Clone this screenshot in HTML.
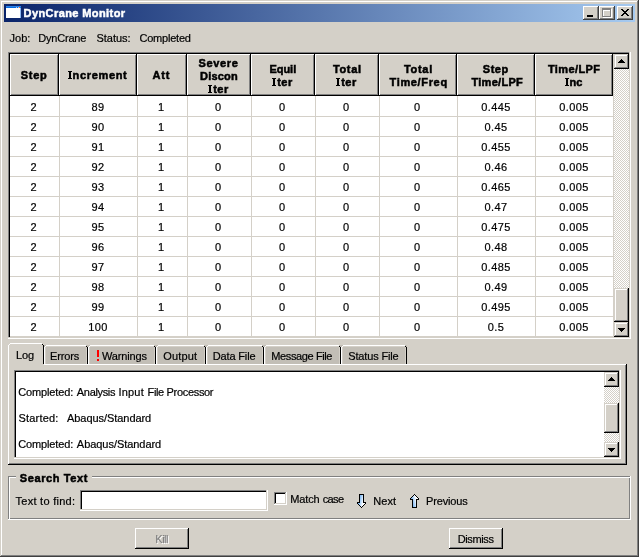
<!DOCTYPE html>
<html><head><meta charset="utf-8"><title>DynCrane Monitor</title>
<style>
html,body{margin:0;padding:0;background:#d4d0c8;}
#w{position:relative;will-change:transform;width:639px;height:557px;overflow:hidden;font-family:"Liberation Sans",sans-serif;font-size:11px;line-height:13px;color:#000;-webkit-text-stroke:0.2px;}
#w div,#w svg,#w span{position:absolute;display:block;}
.t{white-space:pre;}
</style></head><body><div id="w">
<div style="left:0px;top:0px;width:639px;height:557px;background:#d4d0c8;"></div>
<div style="left:1px;top:1px;width:636px;height:1px;background:#fff;"></div>
<div style="left:1px;top:1px;width:1px;height:554px;background:#fff;"></div>
<div style="left:637px;top:1px;width:1px;height:555px;background:#808080;"></div>
<div style="left:1px;top:555px;width:637px;height:1px;background:#808080;"></div>
<div style="left:638px;top:0px;width:1px;height:557px;background:#404040;"></div>
<div style="left:0px;top:556px;width:639px;height:1px;background:#404040;"></div>
<div style="left:4px;top:4px;width:631px;height:18px;background:linear-gradient(to right,#0a246a 0%,#a6caf0 100%);"></div>
<div style="left:6px;top:6px;width:15px;height:12px;background:#fff;"></div>
<div style="left:6px;top:6px;width:15px;height:2px;background:#0a6ce0;"></div>
<div style="left:19px;top:7px;width:1px;height:1px;background:#f07030;"></div>
<div style="left:6px;top:6px;width:15px;height:1px;background:#2b84ea;"></div>
<div style="left:16px;top:7px;width:1px;height:1px;background:#9cc3f2;"></div>
<div style="left:18px;top:7px;width:1px;height:1px;background:#9cc3f2;"></div>
<div style="left:20px;top:8px;width:1px;height:10px;background:#8fb8f0;"></div>
<span class="t " style="left:23.6px;top:7px;letter-spacing:0.408px;font-weight:bold;-webkit-text-stroke:0.5px;color:#fff;">DynCrane Monitor</span>
<div style="left:583px;top:6px;width:16px;height:14px;background:#d4d0c8;"></div>
<div style="left:583px;top:6px;width:15px;height:1px;background:#fff;"></div>
<div style="left:583px;top:6px;width:1px;height:13px;background:#fff;"></div>
<div style="left:598px;top:6px;width:1px;height:14px;background:#404040;"></div>
<div style="left:583px;top:19px;width:16px;height:1px;background:#404040;"></div>
<div style="left:597px;top:7px;width:1px;height:12px;background:#808080;"></div>
<div style="left:584px;top:18px;width:14px;height:1px;background:#808080;"></div>
<div style="left:599px;top:6px;width:16px;height:14px;background:#d4d0c8;"></div>
<div style="left:599px;top:6px;width:15px;height:1px;background:#fff;"></div>
<div style="left:599px;top:6px;width:1px;height:13px;background:#fff;"></div>
<div style="left:614px;top:6px;width:1px;height:14px;background:#404040;"></div>
<div style="left:599px;top:19px;width:16px;height:1px;background:#404040;"></div>
<div style="left:613px;top:7px;width:1px;height:12px;background:#808080;"></div>
<div style="left:600px;top:18px;width:14px;height:1px;background:#808080;"></div>
<div style="left:617px;top:6px;width:16px;height:14px;background:#d4d0c8;"></div>
<div style="left:617px;top:6px;width:15px;height:1px;background:#fff;"></div>
<div style="left:617px;top:6px;width:1px;height:13px;background:#fff;"></div>
<div style="left:632px;top:6px;width:1px;height:14px;background:#404040;"></div>
<div style="left:617px;top:19px;width:16px;height:1px;background:#404040;"></div>
<div style="left:631px;top:7px;width:1px;height:12px;background:#808080;"></div>
<div style="left:618px;top:18px;width:14px;height:1px;background:#808080;"></div>
<div style="left:587px;top:15px;width:6px;height:2px;background:#000;"></div>
<svg style="left:602px;top:8px" width="10" height="10" shape-rendering="crispEdges"><path d="M1 1h9v9h-9zM2 3v6h7v-6z" fill="#fff" fill-rule="evenodd"/><path d="M0 0h9v9h-9zM1 2v6h7v-6z" fill="#808080" fill-rule="evenodd"/></svg>
<svg style="left:621px;top:9px" width="8" height="7" shape-rendering="crispEdges"><path d="M0 0h2v1h-2zM6 0h2v1h-2zM1 1h2v1h-2zM5 1h2v1h-2zM2 2h4v1h-4zM3 3h2v1h-2zM2 4h4v1h-4zM1 5h2v1h-2zM5 5h2v1h-2zM0 6h2v1h-2zM6 6h2v1h-2z" fill="#000"/></svg>
<span class="t " style="left:9.48px;top:32px;letter-spacing:0.05px;">Job:</span>
<span class="t " style="left:38.3px;top:32px;letter-spacing:-0.21px;">DynCrane</span>
<span class="t " style="left:96.4px;top:32px;">Status:</span>
<span class="t " style="left:139.4px;top:32px;letter-spacing:-0.203px;">Completed</span>
<div style="left:8px;top:52px;width:623px;height:287px;background:#fff;"></div>
<div style="left:8px;top:52px;width:622px;height:286px;background:#d4d0c8;"></div>
<div style="left:8px;top:52px;width:621px;height:1px;background:#808080;"></div>
<div style="left:8px;top:52px;width:1px;height:285px;background:#808080;"></div>
<div style="left:9px;top:53px;width:620px;height:1px;background:#000;"></div>
<div style="left:9px;top:53px;width:1px;height:284px;background:#000;"></div>
<div style="left:10px;top:96px;width:604px;height:241px;background:#fff;"></div>
<div style="left:10px;top:54px;width:49px;height:42px;background:#d4d0c8;"></div>
<div style="left:10px;top:54px;width:48px;height:1px;background:#fff;"></div>
<div style="left:10px;top:54px;width:1px;height:41px;background:#fff;"></div>
<div style="left:58px;top:54px;width:1px;height:42px;background:#000;"></div>
<div style="left:10px;top:95px;width:49px;height:1px;background:#000;"></div>
<div style="left:57px;top:55px;width:1px;height:40px;background:#808080;"></div>
<div style="left:11px;top:94px;width:47px;height:1px;background:#808080;"></div>
<span class="t " style="left:20.66px;top:69px;letter-spacing:0.74px;font-weight:bold;-webkit-text-stroke:0.5px;">Step</span>
<div style="left:59px;top:54px;width:78px;height:42px;background:#d4d0c8;"></div>
<div style="left:59px;top:54px;width:77px;height:1px;background:#fff;"></div>
<div style="left:59px;top:54px;width:1px;height:41px;background:#fff;"></div>
<div style="left:136px;top:54px;width:1px;height:42px;background:#000;"></div>
<div style="left:59px;top:95px;width:78px;height:1px;background:#000;"></div>
<div style="left:135px;top:55px;width:1px;height:40px;background:#808080;"></div>
<div style="left:60px;top:94px;width:76px;height:1px;background:#808080;"></div>
<div style="left:69px;top:71px;width:2px;height:8px;background:#000;"></div>
<div style="left:68px;top:71px;width:4px;height:1px;background:#000;"></div>
<div style="left:68px;top:78px;width:4px;height:1px;background:#000;"></div>
<span class="t " style="left:72.5px;top:69px;letter-spacing:0.672px;font-weight:bold;-webkit-text-stroke:0.5px;">ncrement</span>
<div style="left:137px;top:54px;width:50px;height:42px;background:#d4d0c8;"></div>
<div style="left:137px;top:54px;width:49px;height:1px;background:#fff;"></div>
<div style="left:137px;top:54px;width:1px;height:41px;background:#fff;"></div>
<div style="left:186px;top:54px;width:1px;height:42px;background:#000;"></div>
<div style="left:137px;top:95px;width:50px;height:1px;background:#000;"></div>
<div style="left:185px;top:55px;width:1px;height:40px;background:#808080;"></div>
<div style="left:138px;top:94px;width:48px;height:1px;background:#808080;"></div>
<span class="t " style="left:152.4px;top:69px;letter-spacing:0.83px;font-weight:bold;-webkit-text-stroke:0.5px;">Att</span>
<div style="left:187px;top:54px;width:64px;height:42px;background:#d4d0c8;"></div>
<div style="left:187px;top:54px;width:63px;height:1px;background:#fff;"></div>
<div style="left:187px;top:54px;width:1px;height:41px;background:#fff;"></div>
<div style="left:250px;top:54px;width:1px;height:42px;background:#000;"></div>
<div style="left:187px;top:95px;width:64px;height:1px;background:#000;"></div>
<div style="left:249px;top:55px;width:1px;height:40px;background:#808080;"></div>
<div style="left:188px;top:94px;width:62px;height:1px;background:#808080;"></div>
<span class="t " style="left:198.5px;top:57px;letter-spacing:0.632px;font-weight:bold;-webkit-text-stroke:0.5px;">Severe</span>
<span class="t " style="left:200.0px;top:70px;letter-spacing:0.212px;font-weight:bold;-webkit-text-stroke:0.5px;">Discon</span>
<div style="left:209px;top:85px;width:2px;height:8px;background:#000;"></div>
<div style="left:208px;top:85px;width:4px;height:1px;background:#000;"></div>
<div style="left:208px;top:92px;width:4px;height:1px;background:#000;"></div>
<span class="t " style="left:213.2px;top:83px;letter-spacing:0.5px;font-weight:bold;-webkit-text-stroke:0.5px;">ter</span>
<div style="left:251px;top:54px;width:64px;height:42px;background:#d4d0c8;"></div>
<div style="left:251px;top:54px;width:63px;height:1px;background:#fff;"></div>
<div style="left:251px;top:54px;width:1px;height:41px;background:#fff;"></div>
<div style="left:314px;top:54px;width:1px;height:42px;background:#000;"></div>
<div style="left:251px;top:95px;width:64px;height:1px;background:#000;"></div>
<div style="left:313px;top:55px;width:1px;height:40px;background:#808080;"></div>
<div style="left:252px;top:94px;width:62px;height:1px;background:#808080;"></div>
<span class="t " style="left:269.48px;top:63px;letter-spacing:-0.04px;font-weight:bold;-webkit-text-stroke:0.5px;">Equil</span>
<div style="left:273px;top:78px;width:2px;height:8px;background:#000;"></div>
<div style="left:272px;top:78px;width:4px;height:1px;background:#000;"></div>
<div style="left:272px;top:85px;width:4px;height:1px;background:#000;"></div>
<span class="t " style="left:277.2px;top:76px;letter-spacing:0.5px;font-weight:bold;-webkit-text-stroke:0.5px;">ter</span>
<div style="left:315px;top:54px;width:64px;height:42px;background:#d4d0c8;"></div>
<div style="left:315px;top:54px;width:63px;height:1px;background:#fff;"></div>
<div style="left:315px;top:54px;width:1px;height:41px;background:#fff;"></div>
<div style="left:378px;top:54px;width:1px;height:42px;background:#000;"></div>
<div style="left:315px;top:95px;width:64px;height:1px;background:#000;"></div>
<div style="left:377px;top:55px;width:1px;height:40px;background:#808080;"></div>
<div style="left:316px;top:94px;width:62px;height:1px;background:#808080;"></div>
<span class="t " style="left:332.9px;top:63px;letter-spacing:0.665px;font-weight:bold;-webkit-text-stroke:0.5px;">Total</span>
<div style="left:337px;top:78px;width:2px;height:8px;background:#000;"></div>
<div style="left:336px;top:78px;width:4px;height:1px;background:#000;"></div>
<div style="left:336px;top:85px;width:4px;height:1px;background:#000;"></div>
<span class="t " style="left:341.2px;top:76px;letter-spacing:0.5px;font-weight:bold;-webkit-text-stroke:0.5px;">ter</span>
<div style="left:379px;top:54px;width:78px;height:42px;background:#d4d0c8;"></div>
<div style="left:379px;top:54px;width:77px;height:1px;background:#fff;"></div>
<div style="left:379px;top:54px;width:1px;height:41px;background:#fff;"></div>
<div style="left:456px;top:54px;width:1px;height:42px;background:#000;"></div>
<div style="left:379px;top:95px;width:78px;height:1px;background:#000;"></div>
<div style="left:455px;top:55px;width:1px;height:40px;background:#808080;"></div>
<div style="left:380px;top:94px;width:76px;height:1px;background:#808080;"></div>
<span class="t " style="left:403.9px;top:63px;letter-spacing:0.725px;font-weight:bold;-webkit-text-stroke:0.5px;">Total</span>
<span class="t " style="left:389.54px;top:76px;letter-spacing:0.65px;font-weight:bold;-webkit-text-stroke:0.5px;">Time/Freq</span>
<div style="left:457px;top:54px;width:78px;height:42px;background:#d4d0c8;"></div>
<div style="left:457px;top:54px;width:77px;height:1px;background:#fff;"></div>
<div style="left:457px;top:54px;width:1px;height:41px;background:#fff;"></div>
<div style="left:534px;top:54px;width:1px;height:42px;background:#000;"></div>
<div style="left:457px;top:95px;width:78px;height:1px;background:#000;"></div>
<div style="left:533px;top:55px;width:1px;height:40px;background:#808080;"></div>
<div style="left:458px;top:94px;width:76px;height:1px;background:#808080;"></div>
<span class="t " style="left:482.86px;top:63px;letter-spacing:0.5px;font-weight:bold;-webkit-text-stroke:0.5px;">Step</span>
<span class="t " style="left:471.42px;top:76px;letter-spacing:0.294px;font-weight:bold;-webkit-text-stroke:0.5px;">Time/LPF</span>
<div style="left:535px;top:54px;width:78px;height:42px;background:#d4d0c8;"></div>
<div style="left:535px;top:54px;width:77px;height:1px;background:#fff;"></div>
<div style="left:535px;top:54px;width:1px;height:41px;background:#fff;"></div>
<div style="left:612px;top:54px;width:1px;height:42px;background:#000;"></div>
<div style="left:535px;top:95px;width:78px;height:1px;background:#000;"></div>
<div style="left:611px;top:55px;width:1px;height:40px;background:#808080;"></div>
<div style="left:536px;top:94px;width:76px;height:1px;background:#808080;"></div>
<span class="t " style="left:547.9px;top:63px;letter-spacing:0.397px;font-weight:bold;-webkit-text-stroke:0.5px;">Time/LPF</span>
<div style="left:566px;top:78px;width:2px;height:8px;background:#000;"></div>
<div style="left:565px;top:78px;width:4px;height:1px;background:#000;"></div>
<div style="left:565px;top:85px;width:4px;height:1px;background:#000;"></div>
<span class="t " style="left:569.5px;top:76px;letter-spacing:0.02px;font-weight:bold;-webkit-text-stroke:0.5px;">nc</span>
<div style="left:10px;top:116px;width:604px;height:1px;background:#d4d0c8;"></div>
<span class="t " style="left:9px;top:101px;width:49px;text-align:center;">2</span>
<span class="t " style="left:59px;top:101px;letter-spacing:0.4px;width:78px;text-align:center;">89</span>
<span class="t " style="left:136px;top:101px;width:50px;text-align:center;">1</span>
<span class="t " style="left:186px;top:101px;width:64px;text-align:center;">0</span>
<span class="t " style="left:250px;top:101px;width:64px;text-align:center;">0</span>
<span class="t " style="left:314px;top:101px;width:64px;text-align:center;">0</span>
<span class="t " style="left:378px;top:101px;width:78px;text-align:center;">0</span>
<span class="t " style="left:457px;top:101px;letter-spacing:0.4px;width:78px;text-align:center;">0.445</span>
<span class="t " style="left:535px;top:101px;letter-spacing:0.4px;width:78px;text-align:center;">0.005</span>
<div style="left:10px;top:136px;width:604px;height:1px;background:#d4d0c8;"></div>
<span class="t " style="left:9px;top:121px;width:49px;text-align:center;">2</span>
<span class="t " style="left:59px;top:121px;letter-spacing:0.4px;width:78px;text-align:center;">90</span>
<span class="t " style="left:136px;top:121px;width:50px;text-align:center;">1</span>
<span class="t " style="left:186px;top:121px;width:64px;text-align:center;">0</span>
<span class="t " style="left:250px;top:121px;width:64px;text-align:center;">0</span>
<span class="t " style="left:314px;top:121px;width:64px;text-align:center;">0</span>
<span class="t " style="left:378px;top:121px;width:78px;text-align:center;">0</span>
<span class="t " style="left:457px;top:121px;letter-spacing:0.4px;width:78px;text-align:center;">0.45</span>
<span class="t " style="left:535px;top:121px;letter-spacing:0.4px;width:78px;text-align:center;">0.005</span>
<div style="left:10px;top:156px;width:604px;height:1px;background:#d4d0c8;"></div>
<span class="t " style="left:9px;top:141px;width:49px;text-align:center;">2</span>
<span class="t " style="left:59px;top:141px;letter-spacing:0.4px;width:78px;text-align:center;">91</span>
<span class="t " style="left:136px;top:141px;width:50px;text-align:center;">1</span>
<span class="t " style="left:186px;top:141px;width:64px;text-align:center;">0</span>
<span class="t " style="left:250px;top:141px;width:64px;text-align:center;">0</span>
<span class="t " style="left:314px;top:141px;width:64px;text-align:center;">0</span>
<span class="t " style="left:378px;top:141px;width:78px;text-align:center;">0</span>
<span class="t " style="left:457px;top:141px;letter-spacing:0.4px;width:78px;text-align:center;">0.455</span>
<span class="t " style="left:535px;top:141px;letter-spacing:0.4px;width:78px;text-align:center;">0.005</span>
<div style="left:10px;top:176px;width:604px;height:1px;background:#d4d0c8;"></div>
<span class="t " style="left:9px;top:161px;width:49px;text-align:center;">2</span>
<span class="t " style="left:59px;top:161px;letter-spacing:0.4px;width:78px;text-align:center;">92</span>
<span class="t " style="left:136px;top:161px;width:50px;text-align:center;">1</span>
<span class="t " style="left:186px;top:161px;width:64px;text-align:center;">0</span>
<span class="t " style="left:250px;top:161px;width:64px;text-align:center;">0</span>
<span class="t " style="left:314px;top:161px;width:64px;text-align:center;">0</span>
<span class="t " style="left:378px;top:161px;width:78px;text-align:center;">0</span>
<span class="t " style="left:457px;top:161px;letter-spacing:0.4px;width:78px;text-align:center;">0.46</span>
<span class="t " style="left:535px;top:161px;letter-spacing:0.4px;width:78px;text-align:center;">0.005</span>
<div style="left:10px;top:196px;width:604px;height:1px;background:#d4d0c8;"></div>
<span class="t " style="left:9px;top:181px;width:49px;text-align:center;">2</span>
<span class="t " style="left:59px;top:181px;letter-spacing:0.4px;width:78px;text-align:center;">93</span>
<span class="t " style="left:136px;top:181px;width:50px;text-align:center;">1</span>
<span class="t " style="left:186px;top:181px;width:64px;text-align:center;">0</span>
<span class="t " style="left:250px;top:181px;width:64px;text-align:center;">0</span>
<span class="t " style="left:314px;top:181px;width:64px;text-align:center;">0</span>
<span class="t " style="left:378px;top:181px;width:78px;text-align:center;">0</span>
<span class="t " style="left:457px;top:181px;letter-spacing:0.4px;width:78px;text-align:center;">0.465</span>
<span class="t " style="left:535px;top:181px;letter-spacing:0.4px;width:78px;text-align:center;">0.005</span>
<div style="left:10px;top:216px;width:604px;height:1px;background:#d4d0c8;"></div>
<span class="t " style="left:9px;top:201px;width:49px;text-align:center;">2</span>
<span class="t " style="left:59px;top:201px;letter-spacing:0.4px;width:78px;text-align:center;">94</span>
<span class="t " style="left:136px;top:201px;width:50px;text-align:center;">1</span>
<span class="t " style="left:186px;top:201px;width:64px;text-align:center;">0</span>
<span class="t " style="left:250px;top:201px;width:64px;text-align:center;">0</span>
<span class="t " style="left:314px;top:201px;width:64px;text-align:center;">0</span>
<span class="t " style="left:378px;top:201px;width:78px;text-align:center;">0</span>
<span class="t " style="left:457px;top:201px;letter-spacing:0.4px;width:78px;text-align:center;">0.47</span>
<span class="t " style="left:535px;top:201px;letter-spacing:0.4px;width:78px;text-align:center;">0.005</span>
<div style="left:10px;top:236px;width:604px;height:1px;background:#d4d0c8;"></div>
<span class="t " style="left:9px;top:221px;width:49px;text-align:center;">2</span>
<span class="t " style="left:59px;top:221px;letter-spacing:0.4px;width:78px;text-align:center;">95</span>
<span class="t " style="left:136px;top:221px;width:50px;text-align:center;">1</span>
<span class="t " style="left:186px;top:221px;width:64px;text-align:center;">0</span>
<span class="t " style="left:250px;top:221px;width:64px;text-align:center;">0</span>
<span class="t " style="left:314px;top:221px;width:64px;text-align:center;">0</span>
<span class="t " style="left:378px;top:221px;width:78px;text-align:center;">0</span>
<span class="t " style="left:457px;top:221px;letter-spacing:0.4px;width:78px;text-align:center;">0.475</span>
<span class="t " style="left:535px;top:221px;letter-spacing:0.4px;width:78px;text-align:center;">0.005</span>
<div style="left:10px;top:256px;width:604px;height:1px;background:#d4d0c8;"></div>
<span class="t " style="left:9px;top:241px;width:49px;text-align:center;">2</span>
<span class="t " style="left:59px;top:241px;letter-spacing:0.4px;width:78px;text-align:center;">96</span>
<span class="t " style="left:136px;top:241px;width:50px;text-align:center;">1</span>
<span class="t " style="left:186px;top:241px;width:64px;text-align:center;">0</span>
<span class="t " style="left:250px;top:241px;width:64px;text-align:center;">0</span>
<span class="t " style="left:314px;top:241px;width:64px;text-align:center;">0</span>
<span class="t " style="left:378px;top:241px;width:78px;text-align:center;">0</span>
<span class="t " style="left:457px;top:241px;letter-spacing:0.4px;width:78px;text-align:center;">0.48</span>
<span class="t " style="left:535px;top:241px;letter-spacing:0.4px;width:78px;text-align:center;">0.005</span>
<div style="left:10px;top:276px;width:604px;height:1px;background:#d4d0c8;"></div>
<span class="t " style="left:9px;top:261px;width:49px;text-align:center;">2</span>
<span class="t " style="left:59px;top:261px;letter-spacing:0.4px;width:78px;text-align:center;">97</span>
<span class="t " style="left:136px;top:261px;width:50px;text-align:center;">1</span>
<span class="t " style="left:186px;top:261px;width:64px;text-align:center;">0</span>
<span class="t " style="left:250px;top:261px;width:64px;text-align:center;">0</span>
<span class="t " style="left:314px;top:261px;width:64px;text-align:center;">0</span>
<span class="t " style="left:378px;top:261px;width:78px;text-align:center;">0</span>
<span class="t " style="left:457px;top:261px;letter-spacing:0.4px;width:78px;text-align:center;">0.485</span>
<span class="t " style="left:535px;top:261px;letter-spacing:0.4px;width:78px;text-align:center;">0.005</span>
<div style="left:10px;top:296px;width:604px;height:1px;background:#d4d0c8;"></div>
<span class="t " style="left:9px;top:281px;width:49px;text-align:center;">2</span>
<span class="t " style="left:59px;top:281px;letter-spacing:0.4px;width:78px;text-align:center;">98</span>
<span class="t " style="left:136px;top:281px;width:50px;text-align:center;">1</span>
<span class="t " style="left:186px;top:281px;width:64px;text-align:center;">0</span>
<span class="t " style="left:250px;top:281px;width:64px;text-align:center;">0</span>
<span class="t " style="left:314px;top:281px;width:64px;text-align:center;">0</span>
<span class="t " style="left:378px;top:281px;width:78px;text-align:center;">0</span>
<span class="t " style="left:457px;top:281px;letter-spacing:0.4px;width:78px;text-align:center;">0.49</span>
<span class="t " style="left:535px;top:281px;letter-spacing:0.4px;width:78px;text-align:center;">0.005</span>
<div style="left:10px;top:316px;width:604px;height:1px;background:#d4d0c8;"></div>
<span class="t " style="left:9px;top:301px;width:49px;text-align:center;">2</span>
<span class="t " style="left:59px;top:301px;letter-spacing:0.4px;width:78px;text-align:center;">99</span>
<span class="t " style="left:136px;top:301px;width:50px;text-align:center;">1</span>
<span class="t " style="left:186px;top:301px;width:64px;text-align:center;">0</span>
<span class="t " style="left:250px;top:301px;width:64px;text-align:center;">0</span>
<span class="t " style="left:314px;top:301px;width:64px;text-align:center;">0</span>
<span class="t " style="left:378px;top:301px;width:78px;text-align:center;">0</span>
<span class="t " style="left:457px;top:301px;letter-spacing:0.4px;width:78px;text-align:center;">0.495</span>
<span class="t " style="left:535px;top:301px;letter-spacing:0.4px;width:78px;text-align:center;">0.005</span>
<div style="left:10px;top:336px;width:604px;height:1px;background:#d4d0c8;"></div>
<span class="t " style="left:9px;top:321px;width:49px;text-align:center;">2</span>
<span class="t " style="left:59px;top:321px;letter-spacing:0.4px;width:78px;text-align:center;">100</span>
<span class="t " style="left:136px;top:321px;width:50px;text-align:center;">1</span>
<span class="t " style="left:186px;top:321px;width:64px;text-align:center;">0</span>
<span class="t " style="left:250px;top:321px;width:64px;text-align:center;">0</span>
<span class="t " style="left:314px;top:321px;width:64px;text-align:center;">0</span>
<span class="t " style="left:378px;top:321px;width:78px;text-align:center;">0</span>
<span class="t " style="left:457px;top:321px;letter-spacing:0.4px;width:78px;text-align:center;">0.5</span>
<span class="t " style="left:535px;top:321px;letter-spacing:0.4px;width:78px;text-align:center;">0.005</span>
<div style="left:59px;top:96px;width:1px;height:241px;background:#d4d0c8;"></div>
<div style="left:137px;top:96px;width:1px;height:241px;background:#d4d0c8;"></div>
<div style="left:187px;top:96px;width:1px;height:241px;background:#d4d0c8;"></div>
<div style="left:251px;top:96px;width:1px;height:241px;background:#d4d0c8;"></div>
<div style="left:315px;top:96px;width:1px;height:241px;background:#d4d0c8;"></div>
<div style="left:379px;top:96px;width:1px;height:241px;background:#d4d0c8;"></div>
<div style="left:457px;top:96px;width:1px;height:241px;background:#d4d0c8;"></div>
<div style="left:535px;top:96px;width:1px;height:241px;background:#d4d0c8;"></div>
<div style="left:613px;top:96px;width:1px;height:241px;background:#d4d0c8;"></div>
<div style="left:614px;top:54px;width:15px;height:283px;background:repeating-conic-gradient(#fff 0% 25%,#d4d0c8 0% 50%) 0 0/2px 2px;"></div>
<div style="left:614px;top:54px;width:15px;height:15px;background:#d4d0c8;"></div>
<div style="left:615px;top:55px;width:13px;height:1px;background:#fff;"></div>
<div style="left:615px;top:55px;width:1px;height:13px;background:#fff;"></div>
<div style="left:627px;top:55px;width:1px;height:13px;background:#808080;"></div>
<div style="left:615px;top:67px;width:13px;height:1px;background:#808080;"></div>
<div style="left:628px;top:54px;width:1px;height:15px;background:#000;"></div>
<div style="left:614px;top:68px;width:15px;height:1px;background:#000;"></div>
<div style="left:621px;top:59px;width:1px;height:1px;background:#000;"></div>
<div style="left:620px;top:60px;width:3px;height:1px;background:#000;"></div>
<div style="left:619px;top:61px;width:5px;height:1px;background:#000;"></div>
<div style="left:618px;top:62px;width:7px;height:1px;background:#000;"></div>
<div style="left:614px;top:288px;width:15px;height:34px;background:#d4d0c8;"></div>
<div style="left:615px;top:289px;width:13px;height:1px;background:#fff;"></div>
<div style="left:615px;top:289px;width:1px;height:32px;background:#fff;"></div>
<div style="left:627px;top:289px;width:1px;height:32px;background:#808080;"></div>
<div style="left:615px;top:320px;width:13px;height:1px;background:#808080;"></div>
<div style="left:628px;top:288px;width:1px;height:34px;background:#000;"></div>
<div style="left:614px;top:321px;width:15px;height:1px;background:#000;"></div>
<div style="left:614px;top:322px;width:15px;height:15px;background:#d4d0c8;"></div>
<div style="left:615px;top:323px;width:13px;height:1px;background:#fff;"></div>
<div style="left:615px;top:323px;width:1px;height:13px;background:#fff;"></div>
<div style="left:627px;top:323px;width:1px;height:13px;background:#808080;"></div>
<div style="left:615px;top:335px;width:13px;height:1px;background:#808080;"></div>
<div style="left:628px;top:322px;width:1px;height:15px;background:#000;"></div>
<div style="left:614px;top:336px;width:15px;height:1px;background:#000;"></div>
<div style="left:621px;top:331px;width:1px;height:1px;background:#000;"></div>
<div style="left:620px;top:330px;width:3px;height:1px;background:#000;"></div>
<div style="left:619px;top:329px;width:5px;height:1px;background:#000;"></div>
<div style="left:618px;top:328px;width:7px;height:1px;background:#000;"></div>
<div style="left:44px;top:345px;width:44px;height:19px;background:#c2beb6;"></div>
<div style="left:46px;top:345px;width:40px;height:1px;background:#fff;"></div>
<div style="left:45px;top:346px;width:1px;height:1px;background:#fff;"></div>
<div style="left:45px;top:347px;width:1px;height:17px;background:#d4d0c8;"></div>
<div style="left:46px;top:346px;width:40px;height:1px;background:#d4d0c8;"></div>
<div style="left:86px;top:346px;width:1px;height:18px;background:#d4d0c8;"></div>
<div style="left:86px;top:346px;width:1px;height:1px;background:#000;"></div>
<div style="left:87px;top:347px;width:1px;height:17px;background:#000;"></div>
<div style="left:44px;top:347px;width:1px;height:17px;background:#fff;"></div>
<span class="t " style="left:50.0px;top:350px;letter-spacing:-0.15px;">Errors</span>
<div style="left:88px;top:345px;width:68px;height:19px;background:#c2beb6;"></div>
<div style="left:90px;top:345px;width:64px;height:1px;background:#fff;"></div>
<div style="left:89px;top:346px;width:1px;height:1px;background:#fff;"></div>
<div style="left:89px;top:347px;width:1px;height:17px;background:#d4d0c8;"></div>
<div style="left:90px;top:346px;width:64px;height:1px;background:#d4d0c8;"></div>
<div style="left:154px;top:346px;width:1px;height:18px;background:#d4d0c8;"></div>
<div style="left:154px;top:346px;width:1px;height:1px;background:#000;"></div>
<div style="left:155px;top:347px;width:1px;height:17px;background:#000;"></div>
<div style="left:88px;top:347px;width:1px;height:17px;background:#fff;"></div>
<span class="t " style="left:102.0px;top:350px;letter-spacing:-0.15px;">Warnings</span>
<div style="left:156px;top:345px;width:50px;height:19px;background:#c2beb6;"></div>
<div style="left:158px;top:345px;width:46px;height:1px;background:#fff;"></div>
<div style="left:157px;top:346px;width:1px;height:1px;background:#fff;"></div>
<div style="left:157px;top:347px;width:1px;height:17px;background:#d4d0c8;"></div>
<div style="left:158px;top:346px;width:46px;height:1px;background:#d4d0c8;"></div>
<div style="left:204px;top:346px;width:1px;height:18px;background:#d4d0c8;"></div>
<div style="left:204px;top:346px;width:1px;height:1px;background:#000;"></div>
<div style="left:205px;top:347px;width:1px;height:17px;background:#000;"></div>
<div style="left:156px;top:347px;width:1px;height:17px;background:#fff;"></div>
<span class="t " style="left:163.25px;top:350px;letter-spacing:0.15px;">Output</span>
<div style="left:206px;top:345px;width:58px;height:19px;background:#c2beb6;"></div>
<div style="left:208px;top:345px;width:54px;height:1px;background:#fff;"></div>
<div style="left:207px;top:346px;width:1px;height:1px;background:#fff;"></div>
<div style="left:207px;top:347px;width:1px;height:17px;background:#d4d0c8;"></div>
<div style="left:208px;top:346px;width:54px;height:1px;background:#d4d0c8;"></div>
<div style="left:262px;top:346px;width:1px;height:18px;background:#d4d0c8;"></div>
<div style="left:262px;top:346px;width:1px;height:1px;background:#000;"></div>
<div style="left:263px;top:347px;width:1px;height:17px;background:#000;"></div>
<div style="left:206px;top:347px;width:1px;height:17px;background:#fff;"></div>
<span class="t " style="left:212.75px;top:350px;letter-spacing:-0.15px;">Data File</span>
<div style="left:264px;top:345px;width:77px;height:19px;background:#c2beb6;"></div>
<div style="left:266px;top:345px;width:73px;height:1px;background:#fff;"></div>
<div style="left:265px;top:346px;width:1px;height:1px;background:#fff;"></div>
<div style="left:265px;top:347px;width:1px;height:17px;background:#d4d0c8;"></div>
<div style="left:266px;top:346px;width:73px;height:1px;background:#d4d0c8;"></div>
<div style="left:339px;top:346px;width:1px;height:18px;background:#d4d0c8;"></div>
<div style="left:339px;top:346px;width:1px;height:1px;background:#000;"></div>
<div style="left:340px;top:347px;width:1px;height:17px;background:#000;"></div>
<div style="left:264px;top:347px;width:1px;height:17px;background:#fff;"></div>
<span class="t " style="left:271.25px;top:350px;letter-spacing:-0.382px;">Message File</span>
<div style="left:341px;top:345px;width:66px;height:19px;background:#c2beb6;"></div>
<div style="left:343px;top:345px;width:62px;height:1px;background:#fff;"></div>
<div style="left:342px;top:346px;width:1px;height:1px;background:#fff;"></div>
<div style="left:342px;top:347px;width:1px;height:17px;background:#d4d0c8;"></div>
<div style="left:343px;top:346px;width:62px;height:1px;background:#d4d0c8;"></div>
<div style="left:405px;top:346px;width:1px;height:18px;background:#d4d0c8;"></div>
<div style="left:405px;top:346px;width:1px;height:1px;background:#000;"></div>
<div style="left:406px;top:347px;width:1px;height:17px;background:#000;"></div>
<div style="left:341px;top:347px;width:1px;height:17px;background:#fff;"></div>
<span class="t " style="left:348.25px;top:350px;letter-spacing:-0.15px;">Status File</span>
<div style="left:97px;top:350px;width:2px;height:7px;background:#ff0000;"></div>
<div style="left:97px;top:359px;width:2px;height:2px;background:#ff0000;"></div>
<div style="left:8px;top:364px;width:619px;height:101px;background:#d4d0c8;"></div>
<div style="left:8px;top:364px;width:618px;height:1px;background:#fff;"></div>
<div style="left:8px;top:364px;width:1px;height:100px;background:#fff;"></div>
<div style="left:625px;top:365px;width:1px;height:99px;background:#808080;"></div>
<div style="left:9px;top:463px;width:617px;height:1px;background:#808080;"></div>
<div style="left:626px;top:364px;width:1px;height:101px;background:#000;"></div>
<div style="left:8px;top:464px;width:619px;height:1px;background:#000;"></div>
<div style="left:8px;top:343px;width:36px;height:22px;background:#d4d0c8;"></div>
<div style="left:10px;top:343px;width:32px;height:1px;background:#fff;"></div>
<div style="left:8px;top:345px;width:1px;height:20px;background:#fff;"></div>
<div style="left:9px;top:344px;width:1px;height:1px;background:#fff;"></div>
<div style="left:42px;top:344px;width:1px;height:1px;background:#000;"></div>
<div style="left:43px;top:345px;width:1px;height:19px;background:#000;"></div>
<span class="t " style="left:16.0px;top:349px;letter-spacing:-0.15px;">Log</span>
<div style="left:14px;top:370px;width:607px;height:89px;background:#fff;"></div>
<div style="left:14px;top:370px;width:606px;height:88px;background:#d4d0c8;"></div>
<div style="left:14px;top:370px;width:605px;height:1px;background:#808080;"></div>
<div style="left:14px;top:370px;width:1px;height:87px;background:#808080;"></div>
<div style="left:15px;top:371px;width:604px;height:1px;background:#000;"></div>
<div style="left:15px;top:371px;width:1px;height:86px;background:#000;"></div>
<div style="left:16px;top:372px;width:603px;height:85px;background:#fff;"></div>
<span class="t " style="left:18.3px;top:386px;letter-spacing:-0.15px;">Completed:</span>
<span class="t " style="left:76.86px;top:386px;letter-spacing:-0.338px;">Analysis</span>
<span class="t " style="left:118.5px;top:386px;letter-spacing:0.18px;">Input</span>
<span class="t " style="left:147.6px;top:386px;letter-spacing:-0.4px;">File</span>
<span class="t " style="left:166.6px;top:386px;letter-spacing:-0.322px;">Processor</span>
<span class="t " style="left:18.38px;top:412px;letter-spacing:0.208px;">Started:</span>
<span class="t " style="left:67.0px;top:412px;letter-spacing:-0.055px;">Abaqus/Standard</span>
<span class="t " style="left:18.3px;top:438px;letter-spacing:-0.15px;">Completed:</span>
<span class="t " style="left:76.86px;top:438px;letter-spacing:-0.046px;">Abaqus/Standard</span>
<div style="left:604px;top:372px;width:15px;height:85px;background:repeating-conic-gradient(#fff 0% 25%,#d4d0c8 0% 50%) 0 0/2px 2px;"></div>
<div style="left:604px;top:372px;width:15px;height:15px;background:#d4d0c8;"></div>
<div style="left:605px;top:373px;width:13px;height:1px;background:#fff;"></div>
<div style="left:605px;top:373px;width:1px;height:13px;background:#fff;"></div>
<div style="left:617px;top:373px;width:1px;height:13px;background:#808080;"></div>
<div style="left:605px;top:385px;width:13px;height:1px;background:#808080;"></div>
<div style="left:618px;top:372px;width:1px;height:15px;background:#000;"></div>
<div style="left:604px;top:386px;width:15px;height:1px;background:#000;"></div>
<div style="left:611px;top:377px;width:1px;height:1px;background:#000;"></div>
<div style="left:610px;top:378px;width:3px;height:1px;background:#000;"></div>
<div style="left:609px;top:379px;width:5px;height:1px;background:#000;"></div>
<div style="left:608px;top:380px;width:7px;height:1px;background:#000;"></div>
<div style="left:604px;top:403px;width:15px;height:30px;background:#d4d0c8;"></div>
<div style="left:605px;top:404px;width:13px;height:1px;background:#fff;"></div>
<div style="left:605px;top:404px;width:1px;height:28px;background:#fff;"></div>
<div style="left:617px;top:404px;width:1px;height:28px;background:#808080;"></div>
<div style="left:605px;top:431px;width:13px;height:1px;background:#808080;"></div>
<div style="left:618px;top:403px;width:1px;height:30px;background:#000;"></div>
<div style="left:604px;top:432px;width:15px;height:1px;background:#000;"></div>
<div style="left:604px;top:442px;width:15px;height:15px;background:#d4d0c8;"></div>
<div style="left:605px;top:443px;width:13px;height:1px;background:#fff;"></div>
<div style="left:605px;top:443px;width:1px;height:13px;background:#fff;"></div>
<div style="left:617px;top:443px;width:1px;height:13px;background:#808080;"></div>
<div style="left:605px;top:455px;width:13px;height:1px;background:#808080;"></div>
<div style="left:618px;top:442px;width:1px;height:15px;background:#000;"></div>
<div style="left:604px;top:456px;width:15px;height:1px;background:#000;"></div>
<div style="left:611px;top:451px;width:1px;height:1px;background:#000;"></div>
<div style="left:610px;top:450px;width:3px;height:1px;background:#000;"></div>
<div style="left:609px;top:449px;width:5px;height:1px;background:#000;"></div>
<div style="left:608px;top:448px;width:7px;height:1px;background:#000;"></div>
<div style="left:8px;top:476px;width:622px;height:43px;background:none;box-shadow:inset 0 0 0 1px #808080;"></div>
<div style="left:9px;top:477px;width:622px;height:43px;background:none;box-shadow:inset 1px 1px 0 0 #fff;"></div>
<div style="left:630px;top:476px;width:1px;height:44px;background:#fff;"></div>
<div style="left:8px;top:519px;width:623px;height:1px;background:#fff;"></div>
<div style="left:16px;top:470px;width:76px;height:14px;background:#d4d0c8;"></div>
<span class="t " style="left:19.76px;top:472px;letter-spacing:0.608px;font-weight:bold;-webkit-text-stroke:0.5px;">Search Text</span>
<span class="t " style="left:15.5px;top:495px;letter-spacing:0.275px;">Text to find:</span>
<div style="left:80px;top:490px;width:188px;height:21px;background:#fff;"></div>
<div style="left:80px;top:490px;width:187px;height:20px;background:#d4d0c8;"></div>
<div style="left:80px;top:490px;width:186px;height:1px;background:#808080;"></div>
<div style="left:80px;top:490px;width:1px;height:19px;background:#808080;"></div>
<div style="left:81px;top:491px;width:185px;height:1px;background:#000;"></div>
<div style="left:81px;top:491px;width:1px;height:18px;background:#000;"></div>
<div style="left:82px;top:492px;width:184px;height:17px;background:#fff;"></div>
<div style="left:274px;top:492px;width:13px;height:13px;background:#fff;"></div>
<div style="left:274px;top:492px;width:12px;height:12px;background:#d4d0c8;"></div>
<div style="left:274px;top:492px;width:12px;height:1px;background:#808080;"></div>
<div style="left:274px;top:492px;width:1px;height:12px;background:#808080;"></div>
<div style="left:275px;top:493px;width:10px;height:1px;background:#000;"></div>
<div style="left:275px;top:493px;width:1px;height:10px;background:#000;"></div>
<div style="left:276px;top:494px;width:9px;height:9px;background:#fff;"></div>
<span class="t " style="left:290.3px;top:493px;letter-spacing:-0.15px;">Match</span>
<span class="t " style="left:322.7px;top:493px;letter-spacing:-0.63px;">case</span>
<svg style="left:357px;top:494px" width="9" height="14" shape-rendering="crispEdges"><rect x="2" y="0" width="5" height="1" fill="#000"/><rect x="2" y="1" width="1" height="1" fill="#000"/><rect x="6" y="1" width="1" height="1" fill="#000"/><rect x="3" y="1" width="1" height="1" fill="#82bbf4"/><rect x="4" y="1" width="1" height="1" fill="#a0cbf7"/><rect x="5" y="1" width="1" height="1" fill="#bedcf9"/><rect x="2" y="2" width="1" height="1" fill="#000"/><rect x="6" y="2" width="1" height="1" fill="#000"/><rect x="3" y="2" width="1" height="1" fill="#89bff5"/><rect x="4" y="2" width="1" height="1" fill="#a7cff7"/><rect x="5" y="2" width="1" height="1" fill="#c5dffa"/><rect x="2" y="3" width="1" height="1" fill="#000"/><rect x="6" y="3" width="1" height="1" fill="#000"/><rect x="3" y="3" width="1" height="1" fill="#90c3f5"/><rect x="4" y="3" width="1" height="1" fill="#aed3f8"/><rect x="5" y="3" width="1" height="1" fill="#cce3fb"/><rect x="2" y="4" width="1" height="1" fill="#000"/><rect x="6" y="4" width="1" height="1" fill="#000"/><rect x="3" y="4" width="1" height="1" fill="#97c6f6"/><rect x="4" y="4" width="1" height="1" fill="#b4d6f8"/><rect x="5" y="4" width="1" height="1" fill="#d2e7fb"/><rect x="2" y="5" width="1" height="1" fill="#000"/><rect x="6" y="5" width="1" height="1" fill="#000"/><rect x="3" y="5" width="1" height="1" fill="#9dcaf6"/><rect x="4" y="5" width="1" height="1" fill="#bbdaf9"/><rect x="5" y="5" width="1" height="1" fill="#d9eafc"/><rect x="2" y="6" width="1" height="1" fill="#000"/><rect x="6" y="6" width="1" height="1" fill="#000"/><rect x="3" y="6" width="1" height="1" fill="#a4cef7"/><rect x="4" y="6" width="1" height="1" fill="#c2defa"/><rect x="5" y="6" width="1" height="1" fill="#e0eefc"/><rect x="2" y="7" width="1" height="1" fill="#000"/><rect x="6" y="7" width="1" height="1" fill="#000"/><rect x="3" y="7" width="1" height="1" fill="#abd1f8"/><rect x="4" y="7" width="1" height="1" fill="#c9e2fa"/><rect x="5" y="7" width="1" height="1" fill="#e7f2fd"/><rect x="0" y="8" width="3" height="1" fill="#000"/><rect x="6" y="8" width="3" height="1" fill="#000"/><rect x="3" y="8" width="1" height="1" fill="#b2d5f8"/><rect x="4" y="8" width="1" height="1" fill="#d0e5fb"/><rect x="5" y="8" width="1" height="1" fill="#edf5fd"/><rect x="0" y="9" width="1" height="1" fill="#000"/><rect x="8" y="9" width="1" height="1" fill="#000"/><rect x="1" y="9" width="1" height="1" fill="#7db8f4"/><rect x="2" y="9" width="1" height="1" fill="#9bc9f6"/><rect x="3" y="9" width="1" height="1" fill="#b9d9f9"/><rect x="4" y="9" width="1" height="1" fill="#d6e9fb"/><rect x="5" y="9" width="1" height="1" fill="#f4f9fe"/><rect x="6" y="9" width="1" height="1" fill="#ffffff"/><rect x="7" y="9" width="1" height="1" fill="#ffffff"/><rect x="1" y="10" width="1" height="1" fill="#000"/><rect x="7" y="10" width="1" height="1" fill="#000"/><rect x="2" y="10" width="1" height="1" fill="#a2ccf7"/><rect x="3" y="10" width="1" height="1" fill="#bfdcf9"/><rect x="4" y="10" width="1" height="1" fill="#ddedfc"/><rect x="5" y="10" width="1" height="1" fill="#fbfdff"/><rect x="6" y="10" width="1" height="1" fill="#ffffff"/><rect x="2" y="11" width="1" height="1" fill="#000"/><rect x="6" y="11" width="1" height="1" fill="#000"/><rect x="3" y="11" width="1" height="1" fill="#c6e0fa"/><rect x="4" y="11" width="1" height="1" fill="#e4f0fd"/><rect x="5" y="11" width="1" height="1" fill="#ffffff"/><rect x="3" y="12" width="1" height="1" fill="#000"/><rect x="5" y="12" width="1" height="1" fill="#000"/><rect x="4" y="12" width="1" height="1" fill="#ebf4fd"/><rect x="4" y="13" width="1" height="1" fill="#000"/></svg>
<svg style="left:410px;top:494px" width="9" height="14" shape-rendering="crispEdges"><rect x="2" y="13" width="5" height="1" fill="#000"/><rect x="2" y="12" width="1" height="1" fill="#000"/><rect x="6" y="12" width="1" height="1" fill="#000"/><rect x="3" y="12" width="1" height="1" fill="#82bbf4"/><rect x="4" y="12" width="1" height="1" fill="#a0cbf7"/><rect x="5" y="12" width="1" height="1" fill="#bedcf9"/><rect x="2" y="11" width="1" height="1" fill="#000"/><rect x="6" y="11" width="1" height="1" fill="#000"/><rect x="3" y="11" width="1" height="1" fill="#89bff5"/><rect x="4" y="11" width="1" height="1" fill="#a7cff7"/><rect x="5" y="11" width="1" height="1" fill="#c5dffa"/><rect x="2" y="10" width="1" height="1" fill="#000"/><rect x="6" y="10" width="1" height="1" fill="#000"/><rect x="3" y="10" width="1" height="1" fill="#90c3f5"/><rect x="4" y="10" width="1" height="1" fill="#aed3f8"/><rect x="5" y="10" width="1" height="1" fill="#cce3fb"/><rect x="2" y="9" width="1" height="1" fill="#000"/><rect x="6" y="9" width="1" height="1" fill="#000"/><rect x="3" y="9" width="1" height="1" fill="#97c6f6"/><rect x="4" y="9" width="1" height="1" fill="#b4d6f8"/><rect x="5" y="9" width="1" height="1" fill="#d2e7fb"/><rect x="2" y="8" width="1" height="1" fill="#000"/><rect x="6" y="8" width="1" height="1" fill="#000"/><rect x="3" y="8" width="1" height="1" fill="#9dcaf6"/><rect x="4" y="8" width="1" height="1" fill="#bbdaf9"/><rect x="5" y="8" width="1" height="1" fill="#d9eafc"/><rect x="2" y="7" width="1" height="1" fill="#000"/><rect x="6" y="7" width="1" height="1" fill="#000"/><rect x="3" y="7" width="1" height="1" fill="#a4cef7"/><rect x="4" y="7" width="1" height="1" fill="#c2defa"/><rect x="5" y="7" width="1" height="1" fill="#e0eefc"/><rect x="2" y="6" width="1" height="1" fill="#000"/><rect x="6" y="6" width="1" height="1" fill="#000"/><rect x="3" y="6" width="1" height="1" fill="#abd1f8"/><rect x="4" y="6" width="1" height="1" fill="#c9e2fa"/><rect x="5" y="6" width="1" height="1" fill="#e7f2fd"/><rect x="0" y="5" width="3" height="1" fill="#000"/><rect x="6" y="5" width="3" height="1" fill="#000"/><rect x="3" y="5" width="1" height="1" fill="#b2d5f8"/><rect x="4" y="5" width="1" height="1" fill="#d0e5fb"/><rect x="5" y="5" width="1" height="1" fill="#edf5fd"/><rect x="0" y="4" width="1" height="1" fill="#000"/><rect x="8" y="4" width="1" height="1" fill="#000"/><rect x="1" y="4" width="1" height="1" fill="#7db8f4"/><rect x="2" y="4" width="1" height="1" fill="#9bc9f6"/><rect x="3" y="4" width="1" height="1" fill="#b9d9f9"/><rect x="4" y="4" width="1" height="1" fill="#d6e9fb"/><rect x="5" y="4" width="1" height="1" fill="#f4f9fe"/><rect x="6" y="4" width="1" height="1" fill="#ffffff"/><rect x="7" y="4" width="1" height="1" fill="#ffffff"/><rect x="1" y="3" width="1" height="1" fill="#000"/><rect x="7" y="3" width="1" height="1" fill="#000"/><rect x="2" y="3" width="1" height="1" fill="#a2ccf7"/><rect x="3" y="3" width="1" height="1" fill="#bfdcf9"/><rect x="4" y="3" width="1" height="1" fill="#ddedfc"/><rect x="5" y="3" width="1" height="1" fill="#fbfdff"/><rect x="6" y="3" width="1" height="1" fill="#ffffff"/><rect x="2" y="2" width="1" height="1" fill="#000"/><rect x="6" y="2" width="1" height="1" fill="#000"/><rect x="3" y="2" width="1" height="1" fill="#c6e0fa"/><rect x="4" y="2" width="1" height="1" fill="#e4f0fd"/><rect x="5" y="2" width="1" height="1" fill="#ffffff"/><rect x="3" y="1" width="1" height="1" fill="#000"/><rect x="5" y="1" width="1" height="1" fill="#000"/><rect x="4" y="1" width="1" height="1" fill="#ebf4fd"/><rect x="4" y="0" width="1" height="1" fill="#000"/></svg>
<span class="t " style="left:373.25px;top:495px;letter-spacing:0.1px;">Next</span>
<span class="t " style="left:426.0px;top:495px;letter-spacing:-0.15px;">Previous</span>
<div style="left:135px;top:528px;width:54px;height:21px;background:#d4d0c8;"></div>
<div style="left:135px;top:528px;width:53px;height:1px;background:#fff;"></div>
<div style="left:135px;top:528px;width:1px;height:20px;background:#fff;"></div>
<div style="left:187px;top:529px;width:1px;height:19px;background:#808080;"></div>
<div style="left:136px;top:547px;width:52px;height:1px;background:#808080;"></div>
<div style="left:188px;top:528px;width:1px;height:21px;background:#000;"></div>
<div style="left:135px;top:548px;width:54px;height:1px;background:#000;"></div>
<div style="left:449px;top:528px;width:54px;height:21px;background:#d4d0c8;"></div>
<div style="left:449px;top:528px;width:53px;height:1px;background:#fff;"></div>
<div style="left:449px;top:528px;width:1px;height:20px;background:#fff;"></div>
<div style="left:501px;top:529px;width:1px;height:19px;background:#808080;"></div>
<div style="left:450px;top:547px;width:52px;height:1px;background:#808080;"></div>
<div style="left:502px;top:528px;width:1px;height:21px;background:#000;"></div>
<div style="left:449px;top:548px;width:54px;height:1px;background:#000;"></div>
<span class="t " style="left:155.3px;top:533px;letter-spacing:-0.5px;color:#808080;text-shadow:1px 1px 0 #fff;">Kill</span>
<span class="t " style="left:457.7px;top:533px;letter-spacing:-0.38px;">Dismiss</span>
</div></body></html>
